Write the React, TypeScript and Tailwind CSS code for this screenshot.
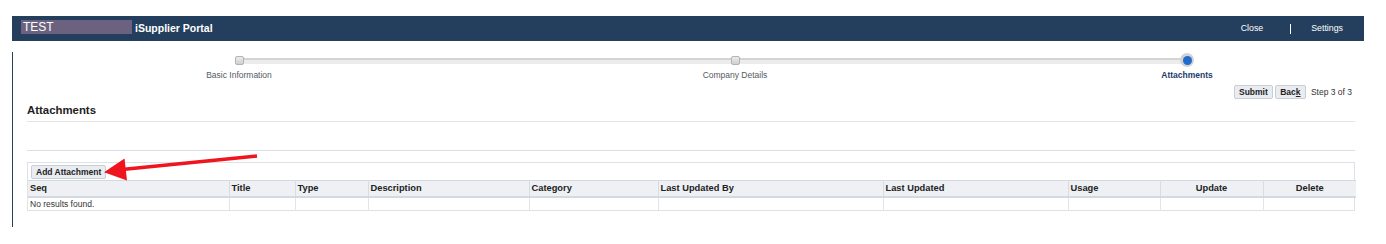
import React from "react";

const columns = [
    { label: "Seq", width: 201 },
    { label: "Title", width: 66 },
    { label: "Type", width: 73 },
    { label: "Description", width: 161 },
    { label: "Category", width: 129 },
    { label: "Last Updated By", width: 225 },
    { label: "Last Updated", width: 185 },
    { label: "Usage", width: 92 },
    { label: "Update", width: 103, center: true },
    { label: "Delete", width: 93, center: true },
];

const Header: React.FC = () => (
    <div className="h-[25px] bg-[#243f5e] flex items-center pl-[9px] pr-[21px] text-white">
        <div className="w-[111px] h-[14px] bg-[#6b6280] mb-[3px] pl-[2px] text-[12px] leading-[14px]">TEST</div>
        <div className="ml-[3px] text-[10.5px] font-bold">iSupplier Portal</div>
        <div className="ml-auto flex items-center text-[8.8px]">
            <span>Close</span>
            <span className="w-px h-[10px] bg-white ml-[27px] mr-[20px]" />
            <span>Settings</span>
        </div>
    </div>
);

const Marker: React.FC<{ current?: boolean }> = ({ current }) =>
    current ? (
        <div className="w-[14px] h-[14px] rounded-full bg-[#d2d2d2] flex items-center justify-center">
            <div className="w-[9px] h-[9px] rounded-full bg-[#1f6bd0]" />
        </div>
    ) : (
        <div className="w-[9px] h-[9px] rounded-[2px] border border-[#b4b4b4] bg-gradient-to-b from-[#ececec] to-[#cfcfcf]" />
    );

const Step: React.FC<{ label: string; current?: boolean; className?: string }> = ({ label, current, className }) => (
    <div className={`w-[120px] flex flex-col items-center ${className ?? ""}`}>
        <div className="h-[16px] flex items-center">
            <Marker current={current} />
        </div>
        <div
            className={`mt-[2px] h-[10px] leading-[10px] text-[8.5px] ${
                current ? "font-bold text-[#1c3a6b]" : "text-[#555b63]"
            }`}
        >
            {label}
        </div>
    </div>
);

const Stepper: React.FC = () => (
    <div className="relative mt-[11px]">
        <div className="absolute left-[212px] w-[948px] top-[6px] h-[6px] bg-[#ececec] border-t-2 border-[#d3d3d3]" />
        <div className="relative flex">
            <Step label="Basic Information" className="ml-[152px]" />
            <Step label="Company Details" className="ml-[376px]" />
            <Step label="Attachments" current className="ml-[332px]" />
        </div>
    </div>
);

const SmallButton: React.FC<{ children: React.ReactNode; className?: string }> = ({ children, className }) => (
    <button
        className={`h-[14px] px-[4px] whitespace-nowrap bg-[#e9ecf0] border border-[#c9ced5] rounded-[2px] text-[8.5px] font-bold text-[#222] leading-[12px] ${className ?? ""}`}
    >
        {children}
    </button>
);

const App: React.FC = () => {
    return (
        <div className="relative bg-white w-[1386px] h-[244px] pt-4 pl-3 pr-[22px] font-['Liberation_Sans',Arial,sans-serif]">
            <Header />
            <div className="border-l border-[#243f5e] pl-[14px] pr-[9px] pb-[16px]">
                <Stepper />

                <div className="mt-[5px] flex items-center justify-end pr-[3px]">
                    <SmallButton className="w-[39px]">Submit</SmallButton>
                    <SmallButton className="ml-[2px] w-[31px]">
                        Bac<span className="underline">k</span>
                    </SmallButton>
                    <span className="ml-[5px] text-[8.5px] text-[#333]">Step 3 of 3</span>
                </div>

                <div className="mt-[4px] pb-[4px] border-b border-[#e3e3e3]">
                    <h2 className="h-[14px] leading-[14px] text-[11.4px] font-bold text-[#222]">Attachments</h2>
                </div>

                <div className="mt-[28px] border-t border-[#d9dfe6]" />

                <div className="mt-[11px] border border-[#dde2e8]">
                    <div className="pl-[3px] pt-[2px] pb-[1px] flex">
                        <SmallButton className="w-[75px] px-0 bg-[#e8eaed] border-[#c3c7cc]">Add Attachment</SmallButton>
                    </div>
                    <table className="w-full table-fixed border-collapse">
                        <colgroup>
                            {columns.map((c) => (
                                <col key={c.label} style={{ width: c.width }} />
                            ))}
                        </colgroup>
                        <thead>
                            <tr className="h-[16px] bg-[#eef0f4] border-t border-b-2 border-[#d2d9e1]">
                                {columns.map((c, i) => (
                                    <th
                                        key={c.label}
                                        className={`px-[2px] text-[9.3px] font-bold text-[#222] leading-[14px] ${
                                            c.center ? "text-center" : "text-left"
                                        } ${i > 0 ? "border-l border-[#d6dce3]" : ""}`}
                                    >
                                        {c.label}
                                    </th>
                                ))}
                            </tr>
                        </thead>
                        <tbody>
                            <tr className="h-[13px]">
                                {columns.map((c, i) => (
                                    <td
                                        key={c.label}
                                        className={`px-[2px] text-[8.5px] text-[#333] leading-[12px] ${
                                            i > 0 ? "border-l border-[#e1e5ea]" : ""
                                        }`}
                                    >
                                        {i === 0 ? "No results found." : ""}
                                    </td>
                                ))}
                            </tr>
                        </tbody>
                    </table>
                </div>
            </div>

            {/* red annotation arrow pointing at the button */}
            <svg className="absolute left-[100px] top-[150px] pointer-events-none" width="165" height="36" viewBox="100 150 165 36">
                <line x1="122" y1="169.5" x2="257" y2="156" stroke="#f0141e" strokeWidth="3.5" />
                <polygon points="104,172.3 124.5,158.5 127,180.5" fill="#f0141e" />
            </svg>
        </div>
    );
};

export default App;
